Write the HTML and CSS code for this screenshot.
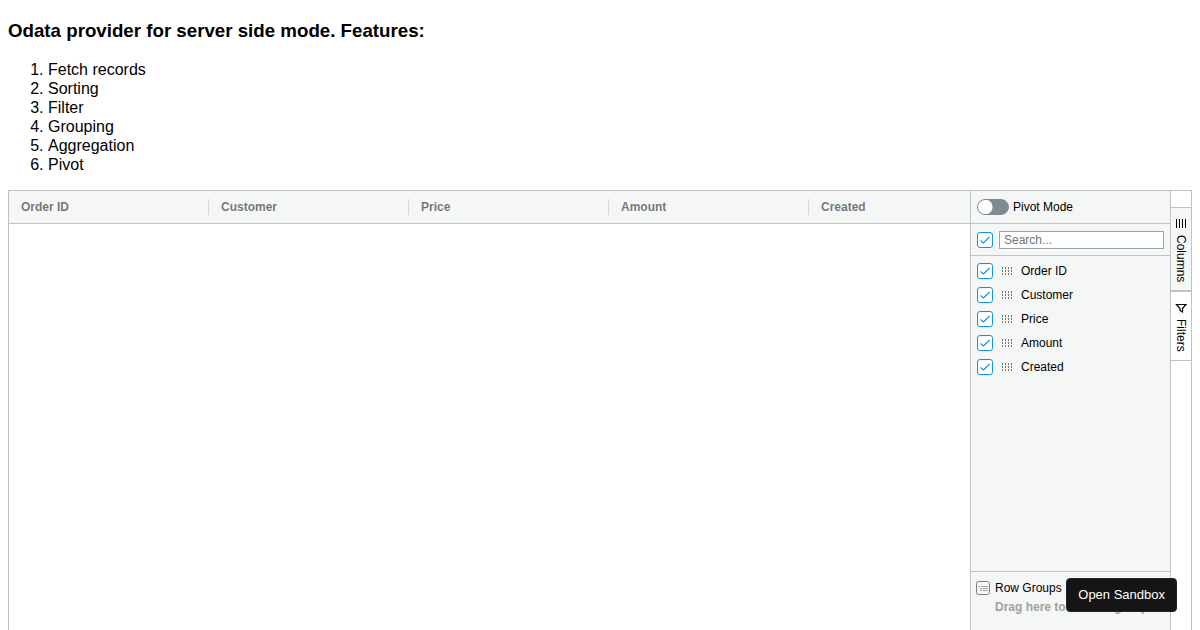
FILE: index.html
```
<!DOCTYPE html>
<html lang="en">
<head>
<meta charset="utf-8">
<title>Odata provider</title>
<link rel="stylesheet" href="styles.css">
</head>
<body>
<svg class="defs" aria-hidden="true">
  <symbol id="grip" viewBox="0 0 12 8">
    <path d="M1.5 0v8M4.5 0v8M7.5 0v8M10.5 0v8" fill="none" stroke="#6f7a7b" stroke-dasharray="2 1"/>
  </symbol>
</svg>
<h3 class="title">Odata provider for server side mode. Features:</h3>
<ol class="features">
  <li>Fetch records</li>
  <li>Sorting</li>
  <li>Filter</li>
  <li>Grouping</li>
  <li>Aggregation</li>
  <li>Pivot</li>
</ol>
<main class="grid">
  <div class="grid-body">
    <table class="grid-table">
      <thead>
        <tr><th><span>Order ID</span></th><th><span>Customer</span></th><th><span>Price</span></th><th><span>Amount</span></th><th><span>Created</span></th></tr>
      </thead>
    </table>
  </div>
  <aside class="panel">
    <div class="pivot">
      <input class="switch" type="checkbox" id="pivot"><label for="pivot">Pivot Mode</label>
    </div>
    <div class="search">
      <input class="check" type="checkbox" aria-label="Select all columns" checked>
      <input class="search-box" type="text" placeholder="Search..." aria-label="Search columns">
    </div>
    <ul class="columns">
      <li><input class="check" type="checkbox" id="c1" checked><svg class="grip"><use href="#grip"/></svg><label for="c1">Order ID</label></li>
      <li><input class="check" type="checkbox" id="c2" checked><svg class="grip"><use href="#grip"/></svg><label for="c2">Customer</label></li>
      <li><input class="check" type="checkbox" id="c3" checked><svg class="grip"><use href="#grip"/></svg><label for="c3">Price</label></li>
      <li><input class="check" type="checkbox" id="c4" checked><svg class="grip"><use href="#grip"/></svg><label for="c4">Amount</label></li>
      <li><input class="check" type="checkbox" id="c5" checked><svg class="grip"><use href="#grip"/></svg><label for="c5">Created</label></li>
    </ul>
    <section class="groups">
      <div class="groups-head">
        <svg class="groups-icon" viewBox="0 0 14 14" fill="none" stroke="#7b7f80"><rect x=".5" y=".5" width="13" height="13" rx="2"/><path d="M2 5.5h2M5 5.5h7M4 7.5h2M7 7.5h5M4 9.5h2M7 9.5h5" stroke="#8b8f90" stroke-width=".8"/></svg>
        <span>Row Groups</span>
      </div>
      <p class="groups-hint">Drag here to set row groups</p>
    </section>
  </aside>
  <nav class="tabs">
    <button class="tab tab-active" type="button">
      <svg class="tab-icon" viewBox="0 0 12 10" fill="none" stroke="#000"><path d="M1.5 0v9M4.5 0v9M7.5 0v9M10.5 0v9"/></svg>
      <span>Columns</span>
    </button>
    <button class="tab" type="button">
      <svg class="tab-icon" viewBox="0 0 12 10" fill="none" stroke="#000" stroke-width="1.2"><path d="M1.5 1.5h9.5L7.5 5.5v3.5L5 7.5v-2z"/></svg>
      <span>Filters</span>
    </button>
  </nav>
</main>
<button class="sandbox" type="button">Open Sandbox</button>
</body>
</html>
```
FILE: styles.css
```
* { box-sizing: border-box; }
body {
  margin: 0;
  padding: 0 8px;
  height: 100vh;
  display: flex;
  flex-direction: column;
  overflow: hidden;
  background: #fff;
  color: #000;
  font: 16px/19px "Liberation Sans", Arial, sans-serif;
}
.defs { display: none; }
.title { margin: 20px 0 18px; line-height: 22px; }
.features { margin: 0 0 16px; padding-left: 40px; }
.grid {
  flex: 1;
  min-height: 0;
  display: flex;
  border: 1px solid #bdc3c7;
  border-bottom: 0;
  font-size: 12px;
  line-height: 16px;
}
.grid-body { flex: 1; min-width: 0; overflow: hidden; background: linear-gradient(#f5f7f7 32px, #bdc3c7 32px, #bdc3c7 33px, #fff 33px); }
.grid-table { table-layout: fixed; width: 1000px; border-collapse: collapse; }
.grid-table th { height: 32px; padding: 0; text-align: left; color: rgba(0, 0, 0, .54); }
.grid-table span { display: block; padding-left: 12px; border-right: 1px solid #d6dadc; }
.panel {
  width: 200px;
  display: flex;
  flex-direction: column;
  border-left: 1px solid #bdc3c7;
  background: #f5f7f7;
}
.pivot, .search { display: flex; align-items: center; padding: 0 6px; border-bottom: 1px solid #bdc3c7; }
.pivot { height: 33px; gap: 4px; }
.search { height: 32px; gap: 6px; }
.switch {
  appearance: none;
  width: 32px;
  height: 16px;
  margin: 0;
  border: 1px solid #7f8c8d;
  border-radius: 8px;
  background: radial-gradient(circle at 7px 7px, #fff 7px, #7f8c8d 8px);
}
.check {
  appearance: none;
  flex: none;
  width: 16px;
  height: 16px;
  margin: 0;
  border: 1px solid #0e93f0;
  border-radius: 3px;
  background: #fff url("data:image/svg+xml,%3Csvg xmlns='http://www.w3.org/2000/svg' viewBox='0 0 14 14'%3E%3Cpath d='M2.5 7.5l3 2.5 6-6' fill='none' stroke='%230e93f0' stroke-width='1.1'/%3E%3C/svg%3E");
}
.search-box {
  flex: 1;
  min-width: 0;
  height: 18px;
  padding: 0 4px;
  border: 1px solid #95a5a6;
  background: #fff;
  font: inherit;
}
.search-box::placeholder { color: #757575; }
.columns { flex: 1; margin: 0; padding: 3px 6px; list-style: none; }
.columns li { display: flex; align-items: center; height: 24px; gap: 8px; }
.grip { width: 12px; height: 8px; }
.groups { padding: 8px 4px 15px; border-top: 1px solid #bdc3c7; white-space: nowrap; overflow: hidden; }
.groups-head { display: flex; align-items: center; gap: 5px; }
.groups-icon { width: 14px; height: 14px; margin-left: 1px; }
.groups-hint { margin: 3px 0 0; padding-left: 20px; font-weight: bold; color: #9da3a3; }
.tabs { width: 21px; padding-top: 16px; border-left: 1px solid #bdc3c7; }
.tab {
  display: flex;
  align-items: center;
  width: 100%;
  padding: 11px 0 8px;
  gap: 6px;
  border: solid #bdc3c7;
  border-width: 1px 0;
  background: #fff;
  color: #000;
  font: inherit;
  line-height: 20px;
  writing-mode: vertical-rl;
}
.tab-active { background: #f5f7f7; }
.tab-icon { width: 12px; height: 10px; }
.sandbox {
  position: fixed;
  right: 23px;
  bottom: 18px;
  padding: 8px 11px;
  border: 1px solid #252525;
  border-radius: 4px;
  background: #151515;
  color: #fff;
  font: 13px/16px "Liberation Sans", Arial, sans-serif;
}
```
